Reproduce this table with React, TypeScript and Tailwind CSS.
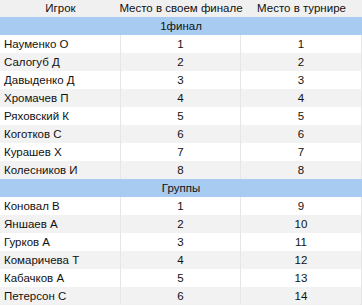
import React from 'react';

type Row = { name: string; place: number; total: number };

const groups: { title: string; rows: Row[] }[] = [
  {
    title: '1финал',
    rows: [
      { name: 'Науменко О', place: 1, total: 1 },
      { name: 'Салогуб Д', place: 2, total: 2 },
      { name: 'Давыденко Д', place: 3, total: 3 },
      { name: 'Хромачев П', place: 4, total: 4 },
      { name: 'Ряховский К', place: 5, total: 5 },
      { name: 'Коготков С', place: 6, total: 6 },
      { name: 'Курашев Х', place: 7, total: 7 },
      { name: 'Колесников И', place: 8, total: 8 },
    ],
  },
  {
    title: 'Группы',
    rows: [
      { name: 'Коновал В', place: 1, total: 9 },
      { name: 'Яншаев А', place: 2, total: 10 },
      { name: 'Гурков А', place: 3, total: 11 },
      { name: 'Комаричева Т', place: 4, total: 12 },
      { name: 'Кабачков А', place: 5, total: 13 },
      { name: 'Петерсон С', place: 6, total: 14 },
    ],
  },
];

const App: React.FC = () => {
  return (
    <div className="w-[362px] h-[306px] overflow-hidden bg-white text-[11.5px] text-[#111] font-['Liberation_Sans',Arial,sans-serif]">
      {/* header */}
      <div className="grid grid-cols-[121px_120px_121px] h-[17px] bg-[#f0f0f0] leading-[17px] text-center whitespace-nowrap">
        <div>Игрок</div>
        <div className="-mx-[10px]">Место в своем финале</div>
        <div>Место в турнире</div>
      </div>

      {groups.map(group => (
        <div key={group.title}>
          <div className="h-[18px] leading-[18px] bg-[#a8cbf1] text-center">{group.title}</div>
          {group.rows.map((row, i) => (
            <div
              key={row.name}
              className={`grid grid-cols-[121px_120px_121px] h-[18px] leading-[18px] whitespace-nowrap ${i % 2 === 0 ? 'bg-white' : 'bg-[#f2f2f2]'}`}
            >
              <div className="pl-[4px] border-r border-[#e6e6e6]">{row.name}</div>
              <div className="text-center border-r border-[#e6e6e6]">{row.place}</div>
              <div className="text-center border-r border-[#e6e6e6]">{row.total}</div>
            </div>
          ))}
        </div>
      ))}
    </div>
  );
};

export default App;
